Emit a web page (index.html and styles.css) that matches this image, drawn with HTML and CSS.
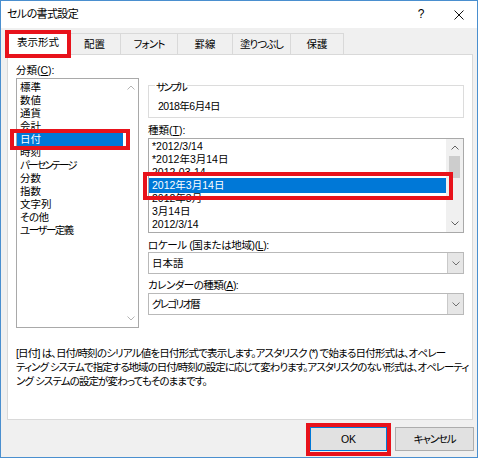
FILE: index.html
```html
<!DOCTYPE html>
<html lang="ja">
<head>
<meta charset="utf-8">
<title>セルの書式設定</title>
<link rel="stylesheet" href="styles.css">
</head>
<body>
<div class="win">
  <div class="titlebar">
    <span class="title">セルの書式設定</span>
    <span class="help">?</span>
    <span class="close"><svg width="10" height="10" viewBox="0 0 10 10"><path d="M0.5 0.5L9.5 9.5M9.5 0.5L0.5 9.5" stroke="#111" stroke-width="1" fill="none"/></svg></span>
  </div>
  <div class="client">
    <div class="tabs">
      <div class="tab tab-active mark mark-tab">表示形式</div>
      <div class="tab tab-w52">配置</div>
      <div class="tab tab-w57 ls-09">フォント</div>
      <div class="tab tab-w55">罫線</div>
      <div class="tab tab-w58 ls-10">塗りつぶし</div>
      <div class="tab tab-w53">保護</div>
    </div>
    <div class="panel">
      <div class="cols">
        <div class="col-left">
          <div class="lbl">分類(<u>C</u>):</div>
          <div class="listbox listbox-cat">
            <ul class="items">
              <li>標準</li>
              <li>数値</li>
              <li>通貨</li>
              <li>会計</li>
              <li class="sel mark mark-cat">日付</li>
              <li>時刻</li>
              <li class="ls-20">パーセンテージ</li>
              <li>分数</li>
              <li>指数</li>
              <li>文字列</li>
              <li class="ls-05">その他</li>
              <li class="ls-15">ユーザー定義</li>
            </ul>
            <div class="vscroll vscroll-cat">
              <span class="arrow"><svg width="8" height="5" viewBox="0 0 8 5"><path d="M0.5 4.5L4 1L7.5 4.5" fill="none" stroke="#b4b4b4"/></svg></span>
              <span class="arrow"><svg width="8" height="5" viewBox="0 0 8 5"><path d="M0.5 0.5L4 4L7.5 0.5" fill="none" stroke="#b4b4b4"/></svg></span>
            </div>
          </div>
        </div>
        <div class="col-right">
          <div class="sample">
            <span class="sample-label ls-22">サンプル</span>
            <div class="sample-value ls-05">2018年6月4日</div>
          </div>
          <div class="lbl lbl-gap">種類(<u>T</u>):</div>
          <div class="listbox listbox-type">
            <ul class="items">
              <li>*2012/3/14</li>
              <li>*2012年3月14日</li>
              <li>2012-03-14</li>
              <li class="sel mark mark-type">2012年3月14日</li>
              <li>2012年3月</li>
              <li>3月14日</li>
              <li>2012/3/14</li>
            </ul>
            <div class="vscroll vscroll-type">
              <span class="arrow"><svg width="8" height="5" viewBox="0 0 8 5"><path d="M0.5 4.5L4 1L7.5 4.5" fill="none" stroke="#606060"/></svg></span>
              <span class="thumb"></span>
              <span class="track"></span>
              <span class="arrow"><svg width="8" height="5" viewBox="0 0 8 5"><path d="M0.5 0.5L4 4L7.5 0.5" fill="none" stroke="#606060"/></svg></span>
            </div>
          </div>
          <div class="lbl lbl-gap ls-04">ロケール (国または地域)(<u>L</u>):</div>
          <div class="combo">
            <span class="combo-value">日本語</span>
            <span class="combo-btn"><svg width="8" height="5" viewBox="0 0 8 5"><path d="M0.5 0.5L4 4L7.5 0.5" fill="none" stroke="#707070"/></svg></span>
          </div>
          <div class="lbl lbl-gap2 ls-05">カレンダーの種類(<u>A</u>):</div>
          <div class="combo combo-gap">
            <span class="combo-value ls-17">グレゴリオ暦</span>
            <span class="combo-btn"><svg width="8" height="5" viewBox="0 0 8 5"><path d="M0.5 0.5L4 4L7.5 0.5" fill="none" stroke="#707070"/></svg></span>
          </div>
        </div>
      </div>
      <p class="desc"><span class="desc-l1">[日付] は、日付/時刻のシリアル値を日付形式で表示します。アスタリスク (*) で始まる日付形式は、オペレー</span><br><span class="desc-l2">ティング システムで指定する地域の日付/時刻の設定に応じて変わります。アスタリスクのない形式は、オペレーティ</span><br>ング システムの設定が変わってもそのままです。</p>
    </div>
    <div class="buttons">
      <button class="btn btn-ok mark mark-ok">OK</button>
      <button class="btn btn-cancel ls-12">キャンセル</button>
    </div>
  </div>
</div>
</body>
</html>
```

FILE: styles.css
```css
* { box-sizing: border-box; }
html, body { margin: 0; padding: 0; background: #fff; }
body {
  font-family: "Liberation Sans", "Noto Sans CJK JP", sans-serif;
  font-size: 10.5px;
  line-height: 13px;
  color: #000;
  font-feature-settings: "palt";
}
u { text-decoration: underline; text-underline-offset: 1px; }

.ls-04 { letter-spacing: -0.4px; }
.ls-05 { letter-spacing: -0.5px; }
.ls-09 { letter-spacing: -0.9px; }
.ls-10 { letter-spacing: -1px; }
.ls-12 { letter-spacing: -1.2px; }
.ls-15 { letter-spacing: -1.5px; }
.ls-17 { letter-spacing: -1.7px; }
.ls-20 { letter-spacing: -2px; }
.ls-22 { letter-spacing: -2.2px; }

.win {
  width: 478px;
  height: 458px;
  border: 1px solid #4a8fcf;
  background: #f0f0f0;
  display: flex;
  flex-direction: column;
}

.titlebar {
  flex: none;
  height: 27px;
  background: #fff;
  display: flex;
  align-items: center;
  padding-left: 6px;
}
.title { flex: 1; font-size: 11px; letter-spacing: -0.6px; }
.help { width: 16px; margin-right: 12px; text-align: center; font-size: 12px; }
.close { width: 36px; display: flex; justify-content: center; align-items: center; }

.client { flex: 1; display: flex; flex-direction: column; padding: 0 3px 0 6px; }

.tabs {
  flex: none;
  height: 26px;
  display: flex;
  align-items: flex-end;
  position: relative;
  z-index: 1;
}
.tab {
  height: 21px;
  border-top: 1px solid #d9d9d9;
  border-right: 1px solid #d9d9d9;
  background: #f0f0f0;
  display: flex;
  align-items: center;
  justify-content: center;
  white-space: nowrap;
}
.tab-active {
  width: 62px;
  height: 24px;
  margin-bottom: -1px;
  border-left: 1px solid #d9d9d9;
  background: #fff;
  padding-bottom: 2px;
}
.tab-w52 { width: 52px; }
.tab-w57 { width: 57px; }
.tab-w55 { width: 55px; }
.tab-w58 { width: 58px; }
.tab-w53 { width: 53px; }

.panel {
  flex: none;
  width: 466px;
  height: 366px;
  border: 1px solid #d9d9d9;
  background: #fff;
  padding: 9px 8px 0 8px;
}
.cols { display: flex; gap: 9px; }
.col-left { width: 123px; display: flex; flex-direction: column; }
.col-right { width: 316px; display: flex; flex-direction: column; }

.lbl { height: 13px; white-space: nowrap; }
.lbl-gap { margin-top: 6px; }
.lbl-gap2 { margin-top: 5px; }

.listbox {
  margin-top: 1px;
  border: 1px solid #a9a9a9;
  background: #fff;
  display: flex;
}
.listbox-cat { height: 250px; }
.listbox-type { height: 95px; }

.items { flex: 1; list-style: none; margin: 0; padding: 0; }
.listbox-cat .items { padding-top: 2px; }
.listbox-type .items { padding-top: 1px; }
.items li { height: 13px; padding-left: 3px; white-space: nowrap; }
.items li.sel {
  background: #0078d7;
  color: #fff;
  box-shadow: 0 -1px 0 #0078d7, 0 1px 0 #0078d7;
}

.vscroll { display: flex; flex-direction: column; align-items: center; }
.vscroll-cat { width: 15px; justify-content: space-between; }
.vscroll-type { width: 17px; background: #f0f0f0; }
.arrow { height: 17px; width: 100%; display: flex; align-items: center; justify-content: center; }
.thumb { width: 11px; height: 22px; background: #cdcdcd; }
.track { flex: 1; }

.sample {
  margin-top: 21px;
  height: 33px;
  border: 1px solid #dcdcdc;
  padding-left: 6px;
}
.sample-label {
  display: block;
  width: fit-content;
  margin-top: -5px;
  padding: 0 1px;
  background: #fff;
}
.sample-value { margin-top: 6px; padding-left: 3px; }

.combo {
  height: 22px;
  border: 1px solid #b9b9b9;
  background: #fff;
  display: flex;
}
.combo-gap { margin-top: 1px; }
.combo-value { flex: 1; line-height: 20px; padding-left: 3px; }
.combo-btn {
  width: 16px;
  background: #e6e6e6;
  border-left: 1px solid #c9c9c9;
  display: flex;
  align-items: center;
  justify-content: center;
}

.desc { margin: 18px 0 0; line-height: 14px; white-space: nowrap; letter-spacing: -0.9px; }
.desc-l1 { letter-spacing: -0.8px; }
.desc-l2 { letter-spacing: -1px; }

.buttons {
  flex: 1;
  display: flex;
  justify-content: flex-end;
  align-items: flex-start;
  gap: 8px;
  padding-top: 7px;
}
.btn {
  height: 24px;
  padding: 0;
  font: inherit;
  color: #000;
  background: #e1e1e1;
  border: 1px solid #adadad;
}
.btn-ok { width: 77px; border-color: #0078d7; }
.btn-cancel { width: 79px; }

.mark { position: relative; }
.mark::after {
  content: "";
  position: absolute;
  border: 4px solid #e8121b;
  pointer-events: none;
}
.mark-tab::after { top: -2px; left: -3px; right: -3px; bottom: -3px; }
.mark-cat::after { top: -4px; left: -7px; right: -7px; bottom: -4px; }
.mark-type::after { top: -7px; left: -6px; right: -7px; bottom: -8px; }
.mark-ok::after { top: -5px; left: -5px; right: -5px; bottom: -6px; }
```
